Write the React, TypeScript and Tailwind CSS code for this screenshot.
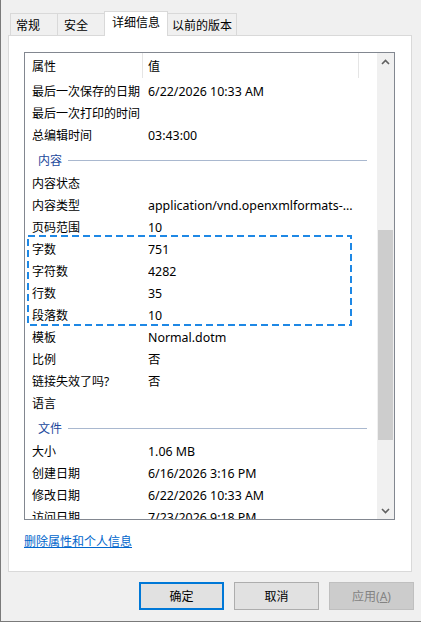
import React from "react";

type Row = { name: string; value?: string };
type Item = Row | { group: string };

const items: Item[] = [
  { name: "最后一次保存的日期", value: "6/22/2026 10:33 AM" },
  { name: "最后一次打印的时间" },
  { name: "总编辑时间", value: "03:43:00" },
  { group: "内容" },
  { name: "内容状态" },
  { name: "内容类型", value: "application/vnd.openxmlformats-..." },
  { name: "页码范围", value: "10" },
  { name: "字数", value: "751" },
  { name: "字符数", value: "4282" },
  { name: "行数", value: "35" },
  { name: "段落数", value: "10" },
  { name: "模板", value: "Normal.dotm" },
  { name: "比例", value: "否" },
  { name: "链接失效了吗?", value: "否" },
  { name: "语言" },
  { group: "文件" },
  { name: "大小", value: "1.06 MB" },
  { name: "创建日期", value: "6/16/2026 3:16 PM" },
  { name: "修改日期", value: "6/22/2026 10:33 AM" },
  { name: "访问日期", value: "7/23/2026 9:18 PM" },
];

function Chevron({ down }: { down?: boolean }) {
  return (
    <svg width="9" height="6" viewBox="0 0 9 6">
      <polyline
        points={down ? "1,1 4.5,4.5 8,1" : "1,5 4.5,1.5 8,5"}
        fill="none"
        stroke="#606060"
        strokeWidth="1.6"
      />
    </svg>
  );
}

function Tab({
  label,
  active,
  className,
}: {
  label: string;
  active?: boolean;
  className: string;
}) {
  return (
    <div
      className={
        active
          ? `relative z-10 -mb-px h-[25px] border border-b-0 border-[#d9d9d9] bg-white pt-[2px] ${className}`
          : `h-[22px] border border-b-0 border-[#d9d9d9] bg-[#f0f0f0] pt-[3px] ${className}`
      }
    >
      {label}
    </div>
  );
}

function Button({
  label,
  kind,
}: {
  label: React.ReactNode;
  kind: "default" | "normal" | "disabled";
}) {
  const styles = {
    default: "border-2 border-[#0078d7] bg-[#e1e1e1] text-black",
    normal: "border border-[#adadad] bg-[#e1e1e1] text-black",
    disabled: "border border-[#bfbfbf] bg-[#cccccc] text-[#838383]",
  }[kind];
  return (
    <div
      className={`flex h-[28px] w-[85px] items-center justify-center text-[12px] ${styles}`}
    >
      {label}
    </div>
  );
}

export default function App() {
  return (
    <div className="flex h-[622px] w-[421px] flex-col border-b border-l border-[#7a7a7a] bg-[#f0f0f0] font-['Noto_Sans','Noto_Sans_CJK_SC',sans-serif] text-[12px] leading-[17px] text-black">
      {/* tab strip */}
      <div className="ml-[9px] mt-[11px] flex h-[24px] items-end">
        <Tab label="常规" className="w-[48px] pl-[5px]" />
        <Tab label="安全" className="-ml-px w-[48px] pl-[6px]" />
        <Tab label="详细信息" active className="-ml-px w-[64px] pl-[7px]" />
        <Tab label="以前的版本" className="-ml-px w-[70px] pl-[4px]" />
      </div>

      {/* page */}
      <div className="ml-[7px] flex h-[537px] w-[404px] flex-col border border-[#d9d9d9] bg-white pl-[15px] pt-[16px]">
        <div className="flex h-[468px] w-[371px] border border-[#828790]">
          <div className="relative flex-1 overflow-hidden">
            {/* column header */}
            <div className="flex h-[27px] items-center">
              <div className="w-[117px] pl-[7px]">属性</div>
              <div className="h-[25px] w-px self-start bg-[#e5e5e5]" />
              <div className="w-[215px] pl-[5px]">值</div>
              <div className="h-[25px] w-px self-start bg-[#e5e5e5]" />
            </div>

            {items.map((it, i) =>
              "group" in it ? (
                <div key={i} className="flex h-[26px] items-center pt-[3px]">
                  <span className="pl-[13px] pr-[6px] text-[#21489c]">
                    {it.group}
                  </span>
                  <div className="mr-[10px] h-px flex-1 bg-[#a9b8cf]" />
                </div>
              ) : (
                <div key={i} className="flex h-[22px] items-center">
                  <div className="w-[123px] shrink-0 pl-[7px]">{it.name}</div>
                  <div className="w-[205px] truncate text-[12.4px]">
                    {it.value}
                  </div>
                </div>
              ),
            )}

            {/* highlighted counts */}
            <svg
              className="absolute left-[2px] top-[182px]"
              width="327"
              height="92"
              viewBox="0 0 327 92"
            >
              <rect
                x="1"
                y="1"
                width="323"
                height="89"
                fill="none"
                stroke="#1e88e5"
                strokeWidth="2"
                strokeDasharray="7 4"
              />
            </svg>
          </div>

          {/* scrollbar */}
          <div className="flex w-[17px] flex-col bg-[#f0f0f0]">
            <div className="flex h-[17px] items-center justify-center">
              <Chevron />
            </div>
            <div className="mx-px mt-[160px] h-[210px] bg-[#cdcdcd]" />
            <div className="flex-1" />
            <div className="flex h-[17px] items-center justify-center">
              <Chevron down />
            </div>
          </div>
        </div>

        <div className="mt-[13px] text-[#0066cc] underline">删除属性和个人信息</div>
      </div>

      {/* dialog buttons */}
      <div className="mr-[7px] mt-[10px] flex justify-end gap-[10px]">
        <Button label="确定" kind="default" />
        <Button label="取消" kind="normal" />
        <Button
          label={
            <span>
              应用(<span className="underline">A</span>)
            </span>
          }
          kind="disabled"
        />
      </div>
    </div>
  );
}
